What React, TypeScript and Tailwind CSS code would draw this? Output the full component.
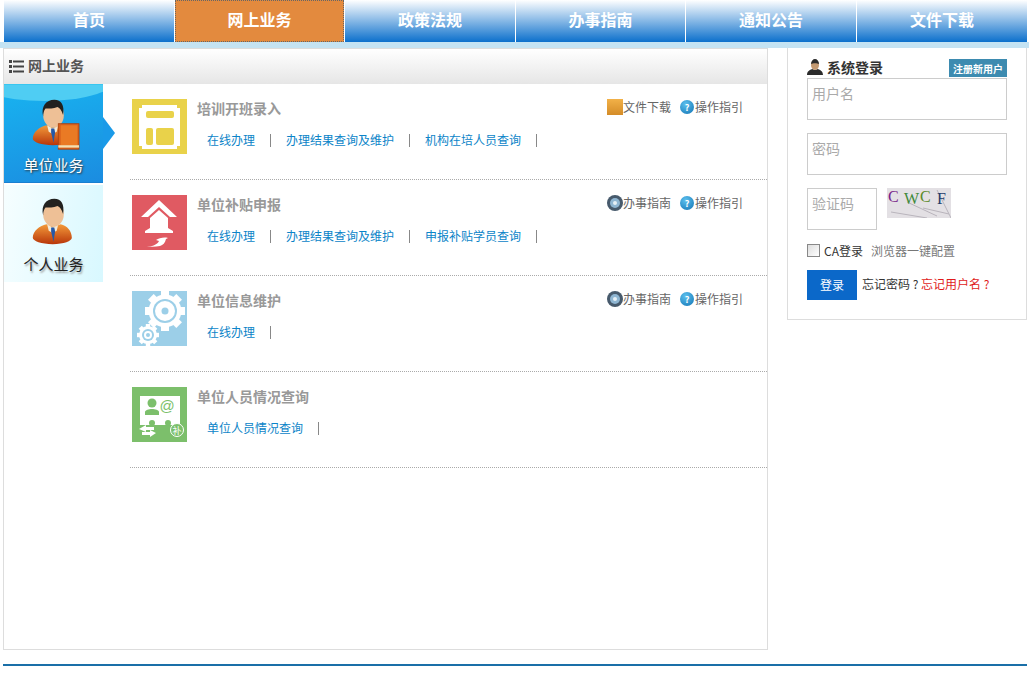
import React from "react";

const navItems = [
  { label: "首页", width: "w-[171px]" },
  { label: "网上业务", width: "w-[170px]" },
  { label: "政策法规", width: "w-[171px]" },
  { label: "办事指南", width: "w-[170px]" },
  { label: "通知公告", width: "w-[171px]" },
  { label: "文件下载", width: "w-[171px]" },
];
const font = "font-['Noto_Sans_CJK_SC','Liberation_Sans',sans-serif]";

function PersonIcon({ book }: { book?: boolean }) {
  const id = book ? "shirtA" : "shirtB";
  return (
    <svg width="53" height="51" viewBox="0 0 66 64">
      <defs>
        <linearGradient id={id} x1="0" y1="0" x2="0" y2="1">
          <stop offset="0" stopColor="#f39a3a" />
          <stop offset="1" stopColor="#b8360a" />
        </linearGradient>
      </defs>
      <path d="M7 50c0-9 9-15 17-17l9 3 9-3c8 2 14 8 14 17 0 4-10 8-24 8S7 54 7 50z" fill={`url(#${id})`} />
      <path d="M25 33l7 4 7-4-2 8-5 3-5-3z" fill="#f3ead8" />
      <path d="M30 37h4l1 5-2 13-3-13z" fill="#2458a8" />
      <ellipse cx="33" cy="20" rx="13" ry="16" fill="#eec096" />
      <path d="M20 22c-3-13 4-21 14-21 9 0 13 7 11 19-2-6-4-9-7-10-5 2-11 2-15 2-2 2-3 6-3 10z" fill="#22211f" />
      {book && (
        <g>
          <rect x="39" y="31" width="26" height="32" fill="#d9601c" stroke="#a8410f" />
          <rect x="42" y="33" width="21" height="25" fill="#ea7a24" />
          <rect x="39" y="58" width="26" height="3" fill="#f4dfb0" />
        </g>
      )}
    </svg>
  );
}

function YellowIcon() {
  return (
    <svg width="55" height="55" viewBox="0 0 55 55">
      <rect width="55" height="55" fill="#e9d24a" />
      <path d="M10 6h35v3h3v38h-3v3H10v-3H7V9h3z" fill="#fff" />
      <rect x="14" y="12" width="28" height="7" rx="2" fill="#e9d24a" />
      <rect x="14" y="29" width="7" height="17" rx="2" fill="#e9d24a" />
      <rect x="24" y="29" width="18" height="17" rx="2" fill="#e9d24a" />
    </svg>
  );
}

function RedIcon() {
  return (
    <svg width="55" height="55" viewBox="0 0 55 55">
      <rect width="55" height="55" fill="#e05a62" />
      <path d="M27 5L45 22h-7L27 12 16 22H9z" fill="#fff" />
      <path d="M27 15l9 8v10l5 3v2H13v-2l5-3V23z" fill="#fff" />
      <path d="M13 51c7 1 12-1 14-5l-3-1c3-2 8-3 12-2l-2 1c-1 4-3 6-6 7-5 1-10 1-15 0z" fill="#fff" />
    </svg>
  );
}

function Gear({ cx, cy, r, hole, hub, bg }: { cx: number; cy: number; r: number; hole: number; hub: number; bg: string }) {
  return (
    <g>
      {[0, 45, 90, 135].map((a) => (
        <rect key={a} x={cx - r * 0.2} y={cy - r} width={r * 0.4} height={r * 2} fill="#fff" transform={`rotate(${a} ${cx} ${cy})`} />
      ))}
      <circle cx={cx} cy={cy} r={r * 0.82} fill="#fff" />
      <circle cx={cx} cy={cy} r={hole} fill={bg} />
      <circle cx={cx} cy={cy} r={hole - 2} fill="#fff" />
      <circle cx={cx} cy={cy} r={hub} fill={bg} />
    </g>
  );
}

function BlueIcon() {
  return (
    <svg width="55" height="55" viewBox="0 0 55 55">
      <rect width="55" height="55" fill="#9ccfe8" />
      <Gear cx={33} cy={20} r={20} hole={12} hub={3.5} bg="#9ccfe8" />
      <Gear cx={16} cy={44} r={11} hole={6} hub={2} bg="#9ccfe8" />
    </svg>
  );
}

function GreenIcon() {
  return (
    <svg width="55" height="55" viewBox="0 0 55 55">
      <rect width="55" height="55" fill="#7cbf6b" />
      <rect x="8" y="9" width="40" height="29" fill="#fff" />
      <circle cx="20" cy="16" r="4.500" fill="#7cbf6b" />
      <path d="M13 28v-3c0-2 4-3 7-3s7 1 7 3v3z" fill="#7cbf6b" />
      <text x="35" y="24" fontSize="15" fill="#7cbf6b" textAnchor="middle" fontFamily="Liberation Sans">@</text>
      <circle cx="20" cy="36" r="3" fill="#7cbf6b" />
      <circle cx="36" cy="36" r="3" fill="#7cbf6b" />
      <path d="M7 42l7-4v2h8v3h-8v2zM24 46l-6-3v2h-8v3h8v2z" fill="#fff" />
      <circle cx="45" cy="43" r="6.500" fill="#7cbf6b" stroke="#fff" />
      <text x="45" y="46.500" fontSize="9" fill="#fff" textAnchor="middle" fontFamily="Noto Sans CJK SC">补</text>
    </svg>
  );
}

function FolderIcon() {
  return (
    <svg width="16" height="16" viewBox="0 0 16 16">
      <defs>
        <linearGradient id="folder" x1="0" y1="0" x2="0" y2="1">
          <stop offset="0" stopColor="#f2b148" />
          <stop offset="1" stopColor="#d48c28" />
        </linearGradient>
      </defs>
      <rect width="16" height="16" fill="url(#folder)" />
    </svg>
  );
}

function GuideIcon() {
  return (
    <svg width="16" height="16" viewBox="0 0 16 16">
      <circle cx="8" cy="8" r="8" fill="#475a6c" />
      <circle cx="8" cy="8" r="5" fill="#8fb6d2" />
      <circle cx="8" cy="8" r="2" fill="#e6f0f6" />
    </svg>
  );
}

function HelpIcon() {
  return (
    <span className="flex h-[14px] w-[14px] items-center justify-center rounded-full bg-[radial-gradient(circle_at_40%_30%,#5cc0ee,#1274b4)] text-[9px] font-bold leading-none text-white">
      ?
    </span>
  );
}

function ListIcon() {
  return (
    <svg width="15" height="15" viewBox="0 0 15 15" fill="#444">
      <rect x="0" y="1" width="3" height="3" />
      <rect x="0" y="6" width="3" height="3" />
      <rect x="0" y="11" width="3" height="3" />
      <rect x="4" y="1.500" width="11" height="2" />
      <rect x="4" y="6.500" width="11" height="2" />
      <rect x="4" y="11.500" width="11" height="2" />
    </svg>
  );
}

function SmallUser() {
  return (
    <svg width="16" height="16" viewBox="0 0 16 16">
      <path d="M0 16c0-4 3-5 5-6l3 1 3-1c2 1 5 2 5 6z" fill="#2b2b2b" />
      <ellipse cx="8" cy="6" rx="4" ry="5" fill="#c49a72" />
      <path d="M4 5c0-3 2-5 4-5s4 2 4 5c-2-1-6-1-8 0z" fill="#2b2b2b" />
    </svg>
  );
}

function Captcha() {
  return (
    <div className="relative ml-[10px] h-[30px] w-[64px] bg-[#e3e0e4] font-['Liberation_Serif',serif] text-[16px] leading-[18px]">
      <svg width="64" height="30" viewBox="0 0 64 30" className="absolute inset-0">
        <path d="M4 24L40 30M20 14l30 14M36 20l26 6M50 2l14 28" stroke="#b9b4bc" fill="none" />
      </svg>
      <div className="relative flex items-start pl-px">
        <span className="w-[16px] text-[#7a1f8a]">C</span>
        <span className="mt-[2px] w-[16px] text-[#3f8a3a]">W</span>
        <span className="w-[17px] text-[#5b8a2a]">C</span>
        <span className="mt-[2px] text-[#223a6a]">F</span>
      </div>
    </div>
  );
}

interface RowData {
  title: string;
  icon: React.ReactNode;
  links: string[];
  guide?: "file" | "guide";
}

const rows: RowData[] = [
  { title: "培训开班录入", icon: <YellowIcon />, links: ["在线办理", "办理结果查询及维护", "机构在培人员查询"], guide: "file" },
  { title: "单位补贴申报", icon: <RedIcon />, links: ["在线办理", "办理结果查询及维护", "申报补贴学员查询"], guide: "guide" },
  { title: "单位信息维护", icon: <BlueIcon />, links: ["在线办理"], guide: "guide" },
  { title: "单位人员情况查询", icon: <GreenIcon />, links: ["单位人员情况查询"] },
];

function BusinessRow({ row }: { row: RowData }) {
  return (
    <div className="flex h-[96px] border-b border-dotted border-[#aaaaaa] pl-[2px] pt-[15px]">
      <div className="h-[55px] w-[55px] shrink-0">{row.icon}</div>
      <div className="ml-[10px] flex-1">
        <div className="flex h-[20px] items-start justify-between pr-[24px]">
          <span className="text-[14px] font-bold leading-[18px] text-[#999999]">{row.title}</span>
          {row.guide && (
            <div className="flex items-center text-[12px] leading-[16px] text-[#666666]">
              {row.guide === "file" ? <FolderIcon /> : <GuideIcon />}
              <span className="mr-[9px]">{row.guide === "file" ? "文件下载" : "办事指南"}</span>
              <HelpIcon />
              <span className="ml-px">操作指引</span>
            </div>
          )}
        </div>
        <div className="mt-[11px] flex h-[20px] items-center pl-[10px] text-[12px]">
          {row.links.map((l) => (
            <React.Fragment key={l}>
              <a className="text-[#0b84c8]">{l}</a>
              <span className="mx-[15px] h-[13px] w-px bg-[#888888]" />
            </React.Fragment>
          ))}
        </div>
      </div>
    </div>
  );
}

function Field({ placeholder, className }: { placeholder: string; className: string }) {
  return (
    <input
      placeholder={placeholder}
      className={`block h-[42px] border border-[#cccccc] pb-[12px] pl-[4px] text-[14px] outline-none placeholder:text-[#aaaaaa] ${className}`}
    />
  );
}

export default function App() {
  return (
    <div className={`relative h-[676px] w-[1029px] overflow-hidden bg-white ${font}`}>
      <nav className="flex h-[42px] pl-[4px]">
        {navItems.map((item, i) => (
          <div key={item.label} className={`${item.width} flex border-r border-[#ffffff]`}>
            <div
              className={
                i === 1
                  ? "flex flex-1 items-center justify-center border border-dotted border-[#666666] bg-[#e38a3e] pb-[4px] text-[16px] font-bold text-white"
                  : "flex flex-1 items-center justify-center bg-[linear-gradient(#ffffff,#0c70cc)] pb-[4px] text-[16px] font-bold text-white"
              }
            >
              {item.label}
            </div>
          </div>
        ))}
      </nav>
      <div className="h-[6px] bg-[#c4e3f3]" />
      <div className="flex justify-between pl-[3px] pr-[2px]">
        <section className="h-[602px] w-[765px] border border-[#dddddd]">
          <div className="flex h-[35px] items-center gap-[4px] bg-[linear-gradient(#ffffff,#e6e6e6)] pl-[5px] text-[14px] font-bold text-[#555555]">
            <ListIcon />
            <span className="pb-[2px]">网上业务</span>
          </div>
          <div className="flex">
            <div className="w-[99px] shrink-0">
              <div className="relative flex h-[99px] flex-col items-center border-t border-[#39c6f0] border-b border-b-[#1a7fd0] bg-[linear-gradient(165deg,#18b4f0,#1b8ce0)]">
                <div className="absolute inset-0 overflow-hidden">
                  <div className="absolute left-[-35px] top-[-32px] h-[48px] w-[150px] rounded-[50%] bg-[#4fcdf3]" />
                </div>
                <div className="relative mt-[14px] h-[51px]">
                  <PersonIcon book />
                </div>
                <span className="relative mt-[5px] text-[15px] leading-[20px] text-white [text-shadow:1px_1px_2px_#333]">单位业务</span>
                <div className="absolute left-[99px] top-[32px] h-0 w-0 border-y-[16px] border-l-[12px] border-y-transparent border-l-[#1a9ae8]" />
              </div>
              <div className="mt-[2px] flex h-[97px] flex-col items-center bg-[linear-gradient(100deg,#f6feff,#d8f8ff)]">
                <div className="mt-[13px] h-[51px]">
                  <PersonIcon />
                </div>
                <span className="mt-[5px] text-[15px] leading-[20px] text-[#222222] [text-shadow:1px_2px_2px_#999]">个人业务</span>
              </div>
            </div>
            <div className="ml-[27px] flex-1">
              {rows.map((r) => (
                <BusinessRow key={r.title} row={r} />
              ))}
            </div>
          </div>
        </section>
        <aside className="h-[272px] w-[240px] border-x border-b border-[#dddddd] pl-[19px] pr-[19px]">
          <div className="flex h-[30px] items-end justify-between">
            <div className="mb-[2px] flex items-center gap-[4px] text-[14px] font-bold leading-[18px] text-[#333333]">
              <SmallUser />
              系统登录
            </div>
            <span className="mb-px flex h-[18px] w-[58px] items-center justify-center bg-[#3d8bb0] text-[10px] font-bold text-white">注册新用户</span>
          </div>
          <Field placeholder="用户名" className="w-[200px]" />
          <Field placeholder="密码" className="mt-[13px] w-[200px]" />
          <div className="mt-[13px] flex items-start">
            <Field placeholder="验证码" className="w-[70px]" />
            <Captcha />
          </div>
          <div className="mt-[12px] flex h-[16px] items-center text-[12px]">
            <span className="h-[13px] w-[13px] border border-[#888888] bg-[linear-gradient(135deg,#dddddd,#ffffff)]" />
            <span className="ml-[4px] pt-px text-[#333333]">CA登录</span>
            <span className="ml-[8px] pt-px text-[#777777]">浏览器一键配置</span>
          </div>
          <div className="mt-[12px] flex items-center text-[12px]">
            <button className="h-[30px] w-[50px] bg-[#0b68c9] pb-px text-white">登录</button>
            <span className="ml-[5px] w-[59px] pb-[3px] text-[#333333]">忘记密码 ?</span>
            <span className="pb-[3px] text-[#e01b1b]">忘记用户名 ?</span>
          </div>
        </aside>
      </div>
      <div className="mx-[3px] mt-[14px] mr-[2px] h-[2px] bg-[#1a6fa8]" />
    </div>
  );
}
